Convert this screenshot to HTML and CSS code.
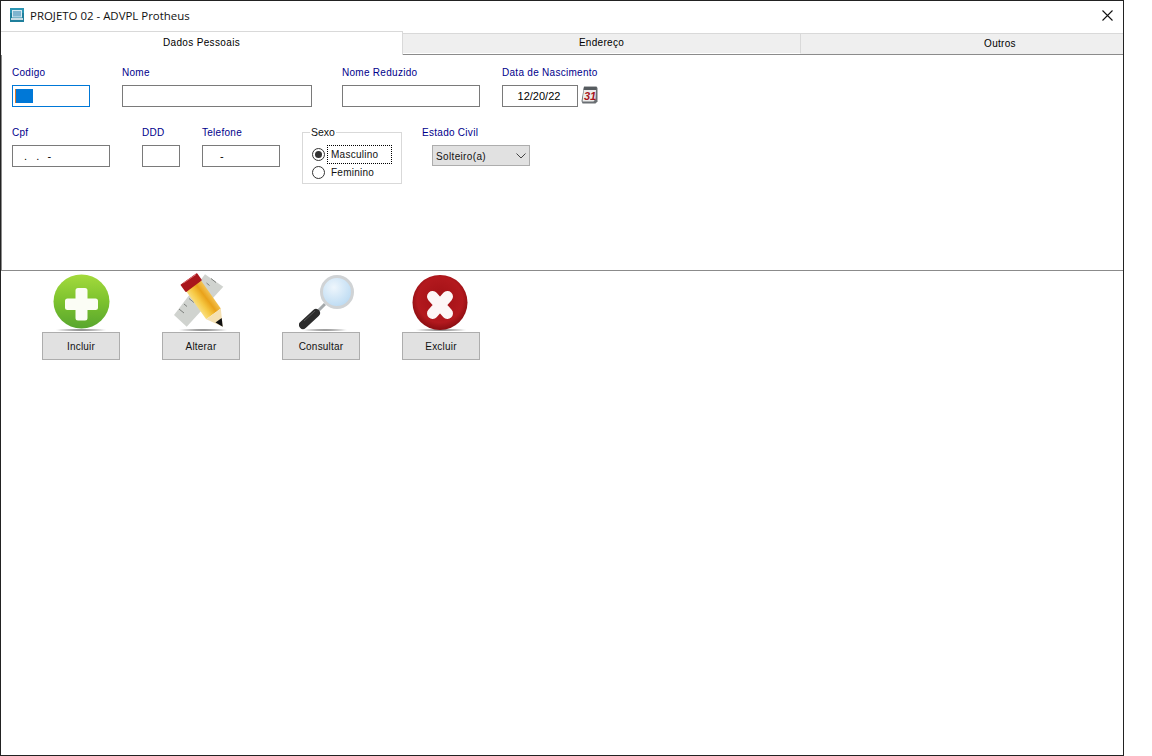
FILE: index.html
```html
<!DOCTYPE html>
<html lang="pt">
<head>
<meta charset="utf-8">
<title>PROJETO 02 - ADVPL Protheus</title>
<link rel="stylesheet" href="styles.css">
</head>
<body>
<div class="window">
  <header class="titlebar">
    <svg class="app-icon" width="14" height="14" viewBox="0 0 14 14">
      <rect width="14" height="14" fill="#1f7f9c"/>
      <rect x="0" y="0" width="14" height="5" fill="#2b95b3"/>
      <rect x="2" y="2" width="10" height="7.500" fill="#d5e9f2"/>
      <rect x="3" y="3" width="8" height="5.500" fill="#7fb4cf"/>
      <rect x="1" y="10" width="12" height="2" fill="#c8dbe4"/>
    </svg>
    <span class="title-text">PROJETO 02 - ADVPL Protheus</span>
    <svg class="close-icon" width="11" height="11" viewBox="0 0 11 11">
      <path d="M0.500 0.500L10.500 10.500M10.500 0.500L0.500 10.500" stroke="#111" stroke-width="1.100" fill="none"/>
    </svg>
  </header>
  <nav class="tabs">
    <div class="tab tab-active">Dados Pessoais</div>
    <div class="tab tab-second">Endereço</div>
    <div class="tab tab-third">Outros</div>
  </nav>
  <main class="panel">
    <div class="form-row row-one">
      <div class="field w-codigo">
        <label class="label">Codigo</label>
        <div class="input input-focus"><span class="selection"></span></div>
      </div>
      <div class="field w-nome">
        <label class="label">Nome</label>
        <div class="input"></div>
      </div>
      <div class="field w-reduzido">
        <label class="label">Nome Reduzido</label>
        <div class="input"></div>
      </div>
      <div class="field w-data">
        <label class="label label-nowrap">Data de Nascimento</label>
        <div class="date-wrap">
          <div class="input input-date">12/20/22</div>
          <svg class="cal-icon" width="17" height="18" viewBox="0 0 17 18">
            <path d="M3 0.500H15.500L16.500 2V15.500L14.500 17.500H1.500L0.500 15Z" fill="#6a6f73"/>
            <path d="M3 2.500H15V3.500L14.500 13L12.500 15.500H1.500Z" fill="#ececec"/>
            <path d="M3 1H15.500V4H2.500Z" fill="#565b5f"/>
            <text x="3" y="14" class="cal-text">31</text>
          </svg>
        </div>
      </div>
    </div>
    <div class="form-row row-two">
      <div class="field w-cpf">
        <label class="label">Cpf</label>
        <div class="input input-mask mask-cpf">.&nbsp;&nbsp;&nbsp;.&nbsp;&nbsp;&#8201;-</div>
      </div>
      <div class="field w-ddd">
        <label class="label">DDD</label>
        <div class="input"></div>
      </div>
      <div class="field w-tel">
        <label class="label">Telefone</label>
        <div class="input input-mask mask-tel">-</div>
      </div>
      <fieldset class="group">
        <legend class="group-title">Sexo</legend>
        <div class="radio-row">
          <span class="radio radio-on"></span>
          <span class="radio-label radio-focus">Masculino</span>
        </div>
        <div class="radio-row">
          <span class="radio"></span>
          <span class="radio-label">Feminino</span>
        </div>
      </fieldset>
      <div class="field w-civil">
        <label class="label">Estado Civil</label>
        <div class="select">
          <span>Solteiro(a)</span>
          <svg width="10" height="6" viewBox="0 0 10 6"><path d="M0.500 0.500L5 5L9.500 0.500" stroke="#444" fill="none"/></svg>
        </div>
      </div>
    </div>
  </main>
  <section class="actions">
    <div class="action">
      <svg class="action-icon" width="60" height="60" viewBox="0 0 60 60">
        <defs>
          <linearGradient id="g" x1="0" y1="0" x2="0" y2="1">
            <stop offset="0" stop-color="#a4da3c"/><stop offset="0.500" stop-color="#7cc22e"/><stop offset="1" stop-color="#58a62e"/>
          </linearGradient>
          <radialGradient id="r" cx="0.500" cy="0.450" r="0.550">
            <stop offset="0" stop-color="#a01015"/><stop offset="0.750" stop-color="#b3191e"/><stop offset="1" stop-color="#8a0d11"/>
          </radialGradient>
          <radialGradient id="lens" cx="0.400" cy="0.350" r="0.700">
            <stop offset="0" stop-color="#eef6fc"/><stop offset="1" stop-color="#b9d9f2"/>
          </radialGradient>
          <linearGradient id="pen" gradientUnits="userSpaceOnUse" x1="15" y1="20" x2="29.700" y2="9">
            <stop offset="0" stop-color="#f9dc78"/><stop offset="0.300" stop-color="#f6c843"/><stop offset="0.650" stop-color="#e9a21a"/><stop offset="1" stop-color="#f3c556"/>
          </linearGradient>
          <radialGradient id="sh"><stop offset="0" stop-color="#666"/><stop offset="1" stop-color="#666" stop-opacity="0"/></radialGradient>
        </defs>
        <ellipse cx="30" cy="59" rx="27" ry="1.500" fill="url(#sh)"/>
        <ellipse cx="30.500" cy="30.500" rx="28" ry="27" fill="url(#g)"/>
        <path d="M27 17H34Q36.500 17 36.500 19.500V27.500H44.500Q47 27.500 47 30V36.500Q47 39 44.500 39H36.500V47Q36.500 49.500 34 49.500H27Q24.500 49.500 24.500 47V39H16.500Q14 39 14 36.500V30Q14 27.500 16.500 27.500H24.500V19.500Q24.500 17 27 17Z" fill="#fbfdf5"/>
      </svg>
      <button class="btn">Incluir</button>
    </div>
    <div class="action">
      <svg class="action-icon" width="60" height="60" viewBox="0 0 60 60">
        <ellipse cx="32" cy="59" rx="26" ry="1.500" fill="url(#sh)"/>
        <path d="M34 3.300L52.300 15.700L15.700 55.700L3 44Z" fill="#d0d3cf"/>
        <path d="M8 38l5 4M13 33l3 2.500M18 27.500l5 4M23 22l3 2.500M40 7.500l5 4M35.500 12l3 2.500" stroke="#7d807d" fill="none"/>
        <path d="M15 20L29.700 9L49.800 37.600L35.200 48.200Z" fill="url(#pen)"/>
        <path d="M35.200 48.200L49.800 37.600L51.700 55.700Z" fill="#f4e0b2"/>
        <path d="M44.500 51.500L50.700 47L51.700 55.700Z" fill="#111"/>
        <path d="M10.700 14L25.700 3.300L29.700 9L15 20Z" fill="#a9161c" stroke="#a9161c" stroke-width="2" stroke-linejoin="round"/>
        <path d="M12.500 12L25 3.500" stroke="#d8666a" fill="none"/>
      </svg>
      <button class="btn">Alterar</button>
    </div>
    <div class="action">
      <svg class="action-icon icon-overflow" width="60" height="60" viewBox="0 0 60 60">
        <ellipse cx="34" cy="59" rx="24" ry="1.300" fill="url(#sh)"/>
        <path d="M26 41L34 33" stroke="#a5a9ab" stroke-width="3" fill="none"/>
        <path d="M12 54L25 42" stroke="#2b2b2b" stroke-width="8" stroke-linecap="round" fill="none"/>
        <path d="M13 50L24 40" stroke="#555" stroke-width="1" fill="none"/>
        <circle cx="46" cy="21" r="15.500" fill="url(#lens)" stroke="#d0d3d5" stroke-width="3"/>
      </svg>
      <button class="btn">Consultar</button>
    </div>
    <div class="action">
      <svg class="action-icon" width="60" height="60" viewBox="0 0 60 60">
        <ellipse cx="30" cy="59" rx="27" ry="1.500" fill="url(#sh)"/>
        <circle cx="29" cy="31.500" r="27.500" fill="url(#r)"/>
        <path d="M21.500 25.500L36.500 42.500M36.500 25.500L21.500 42.500" stroke="#fdf6f6" stroke-width="11" stroke-linecap="round" fill="none"/>
      </svg>
      <button class="btn">Excluir</button>
    </div>
  </section>
</div>
</body>
</html>
```
FILE: styles.css
```css
* { box-sizing: border-box; }
html, body { margin: 0; padding: 0; background: #fff; }
body { font-family: "Liberation Sans", Arial, sans-serif; font-size: 10px; color: #000; }
.window { width: 1124px; height: 756px; border: 1px solid #222; background: #fff; display: flex; flex-direction: column; overflow: hidden; }
.titlebar { height: 30px; flex: none; display: flex; align-items: center; padding: 0 10px 2px 9px; }
.app-icon { flex: none; }
.title-text { margin-left: 6px; font-family: "Open Sans", "Noto Sans", sans-serif; font-size: 11.450px; color: #111; }
.close-icon { margin-left: auto; }
.tabs { height: 23px; flex: none; display: flex; }
.tab { flex: none; display: flex; align-items: center; justify-content: center; font-size: 10px; letter-spacing: 0.300px; background: #efefef; border-top: 1px solid #d9d9d9; border-right: 1px solid #d9d9d9; border-bottom: 1px solid #fff; padding-bottom: 2px; }
.tab-active { width: 402px; background: #fff; border-bottom: none; margin-bottom: -1px; position: relative; z-index: 1; letter-spacing: 0.350px; }
.tab-second { width: 398px; margin-top: 2px; height: 21px; }
.tab-third { width: 398px; margin-top: 2px; height: 21px; border-right: none; border-bottom: none; }
.panel { height: 217px; flex: none; border-top: 1px solid #8b8b8b; border-left: 1px solid #8b8b8b; border-bottom: 1px solid #8b8b8b; padding: 11px 0 0 10px; }
.form-row { display: flex; align-items: flex-start; }
.row-two { margin-top: 19px; }
.field { display: flex; flex-direction: column; flex: none; }
.label { height: 19px; font-size: 10px; letter-spacing: 0.280px; line-height: 13px; color: #00008b; white-space: nowrap; }
.input { height: 22px; width: 100%; border: 1px solid #7a7a7a; background: #fff; font-size: 10px; letter-spacing: 0.200px; color: #000; }
.input-focus { border-color: #0078d7; padding: 3px 2px; }
.selection { display: block; width: 18px; height: 14px; background: #0078d7; border-left: 1px solid #d9782d; }
.w-codigo { width: 78px; margin-right: 32px; }
.w-nome { width: 190px; margin-right: 30px; }
.w-reduzido { width: 138px; margin-right: 22px; }
.w-data { width: 110px; }
.date-wrap { display: flex; align-items: center; }
.input-date { width: 76px; flex: none; display: flex; align-items: center; justify-content: center; font-size: 11px; letter-spacing: 0; padding-right: 2px; }
.cal-icon { margin-left: 3px; flex: none; margin-top: -2px; }
.cal-text { font-family: "Liberation Sans", sans-serif; font-size: 11px; font-weight: 700; font-style: italic; fill: #a8161c; }
.w-cpf { width: 98px; margin-right: 32px; }
.w-ddd { width: 38px; margin-right: 22px; }
.w-tel { width: 78px; margin-right: 22px; }
.input-mask { display: flex; align-items: center; line-height: 1; white-space: pre; }
.mask-cpf { padding-left: 11px; font-size: 11px; letter-spacing: 0; }
.mask-tel { padding-left: 17px; font-size: 11px; }
.group { flex: none; width: 100px; height: 52px; margin: 6px 20px 0 0; padding: 12px 0 0 9px; border: 1px solid #d9d9d9; position: relative; }
.group-title { position: absolute; top: -7px; left: 7px; padding: 0 1px; background: #fff; font-size: 10.500px; line-height: 13px; color: #111; }
.radio-row { display: flex; align-items: center; height: 18px; }
.radio { width: 13px; height: 13px; border-radius: 50%; border: 1px solid #333; background: #fff; flex: none; display: flex; align-items: center; justify-content: center; }
.radio-on::after { content: ""; width: 7px; height: 7px; border-radius: 50%; background: #333; }
.radio-label { margin-left: 3px; padding: 2px 2px 2px 3px; font-size: 10px; letter-spacing: 0.250px; line-height: 13px; color: #111; }
.radio-focus { outline: 1px dotted #000; outline-offset: 0; width: 63px; }
.w-civil { width: 108px; }
.select { margin-left: 10px; width: 98px; height: 21px; background: #e1e1e1; border: 1px solid #adadad; display: flex; align-items: center; justify-content: space-between; padding: 1px 3px 0; font-size: 10px; letter-spacing: 0.350px; color: #111; }
.actions { display: flex; padding: 0 0 0 41px; }
.action { flex: none; width: 78px; margin-right: 42px; display: flex; flex-direction: column; align-items: center; }
.action-icon { display: block; height: 60px; margin-top: 0; filter: blur(0.300px); }
.icon-overflow { overflow: visible; }
.btn { display: block; width: 78px; height: 28px; margin-top: 1px; background: #e1e1e1; border: 1px solid #adadad; padding: 0; font-family: "Liberation Sans", sans-serif; font-size: 10px; letter-spacing: 0.200px; color: #111; }
```
